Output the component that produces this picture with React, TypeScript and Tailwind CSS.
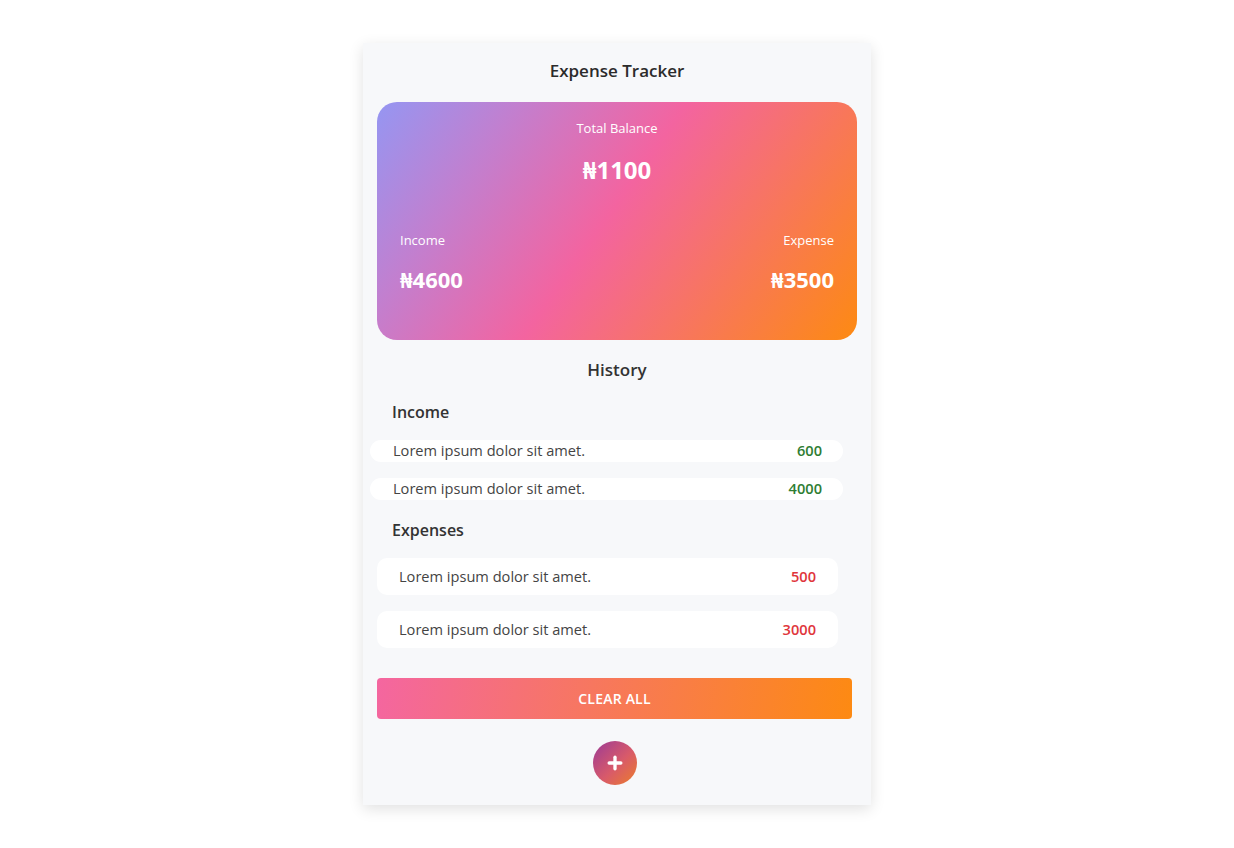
import { Plus } from 'lucide-react';

const income = [
  { text: 'Lorem ipsum dolor sit amet.', amount: 600 },
  { text: 'Lorem ipsum dolor sit amet.', amount: 4000 },
];

const expenses = [
  { text: 'Lorem ipsum dolor sit amet.', amount: 500 },
  { text: 'Lorem ipsum dolor sit amet.', amount: 3000 },
];

export default function App() {
  return (
    <div
      className="min-h-screen w-full bg-white pt-[43px]"
      style={{ fontFamily: '"Open Sans", "Noto Sans", sans-serif' }}
    >
      <div className="mx-auto w-[508px] bg-[#f7f8fa] pb-[20px] pt-[16px] shadow-[0_4px_14px_rgba(0,0,0,0.12)]">
        <h1 className="text-center text-[17px] font-semibold leading-[24px] text-[#2b2b2b]">Expense Tracker</h1>

        {/* balance card */}
        <div className="mx-[14px] mt-[19px] h-[238px] rounded-[20px] bg-[linear-gradient(125deg,#9596f2_0%,#c27fcf_22%,#f364a0_48%,#fd8a12_100%)] px-[23px] pt-[16px] text-white">
          <p className="text-center text-[13px] leading-[20px]">Total Balance</p>
          <p className="mt-[17px] text-center text-[24px] font-bold leading-[30px]">₦1100</p>
          <div className="mt-[45px] flex justify-between">
            <div>
              <p className="text-[13px] leading-[20px]">Income</p>
              <p className="mt-[14px] text-[22px] font-bold leading-[30px]">₦4600</p>
            </div>
            <div className="text-right">
              <p className="text-[13px] leading-[20px]">Expense</p>
              <p className="mt-[14px] text-[22px] font-bold leading-[30px]">₦3500</p>
            </div>
          </div>
        </div>

        <h2 className="mt-[18px] text-center text-[17px] font-semibold leading-[24px] text-[#333]">History</h2>

        <h3 className="ml-[29px] mt-[18px] text-[16px] font-semibold leading-[24px] text-[#333]">Income</h3>
        <div className="mt-[16px] flex flex-col gap-[16px]">
          {income.map((item, i) => (
            <div
              key={i}
              className="ml-[7px] flex h-[22px] w-[473px] items-center justify-between rounded-full bg-white pl-[23px] pr-[21px] text-[14.6px]"
            >
              <span className="text-[#444]">{item.text}</span>
              <span className="font-semibold text-[#2e7d32]">{item.amount}</span>
            </div>
          ))}
        </div>

        <h3 className="ml-[29px] mt-[18px] text-[16px] font-semibold leading-[24px] text-[#333]">Expenses</h3>
        <div className="mt-[16px] flex flex-col gap-[16px]">
          {expenses.map((item, i) => (
            <div
              key={i}
              className="ml-[14px] flex h-[37px] w-[461px] items-center justify-between rounded-[10px] bg-white pl-[22px] pr-[22px] text-[14.6px]"
            >
              <span className="text-[#444]">{item.text}</span>
              <span className="font-semibold text-[#e0353b]">{item.amount}</span>
            </div>
          ))}
        </div>

        <button className="ml-[14px] mt-[30px] block h-[41px] w-[475px] rounded-[4px] bg-[linear-gradient(100deg,#f466a0_0%,#f7775f_45%,#fd8a12_100%)] text-[14px] font-semibold tracking-[0.2px] text-white">
          CLEAR ALL
        </button>

        <div className="ml-[14px] mt-[22px] flex w-[475px] justify-center">
          <button className="flex h-[44px] w-[44px] items-center justify-center rounded-full bg-[linear-gradient(135deg,#9b3a96_0%,#d85a6a_55%,#ec7d2a_100%)] text-white">
            <Plus size={20} strokeWidth={4} />
          </button>
        </div>
      </div>
    </div>
  );
}
